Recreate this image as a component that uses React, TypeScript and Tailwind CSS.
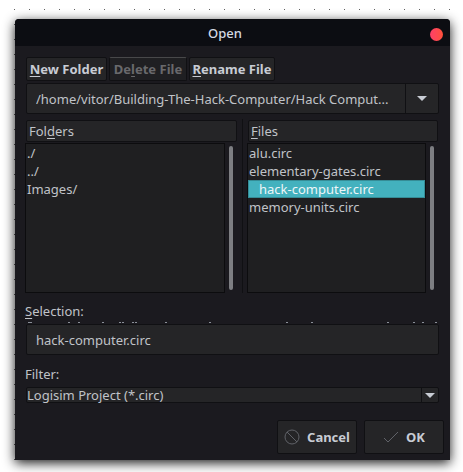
import { useState } from "react";
import type { ReactNode } from "react";

const folders = ["./", "../", "Images/"];
const files = ["alu.circ", "elementary-gates.circ", "hack-computer.circ", "memory-units.circ"];

function Mnemonic({ text, at }: { text: string; at: number }) {
  return (
    <span>
      {text.slice(0, at)}
      <span className="underline underline-offset-2">{text[at]}</span>
      {text.slice(at + 1)}
    </span>
  );
}

function Button({ children, className = "", disabled }: { children: ReactNode; className?: string; disabled?: boolean }) {
  return (
    <button
      type="button"
      disabled={disabled}
      className={`flex items-center justify-center rounded-xs border border-[#101013] bg-[#252527] font-bold whitespace-nowrap text-[#c8ccd4] disabled:border-t-[#48484a] disabled:bg-[#1f1f22] disabled:text-[#69696c] ${className}`}
    >
      {children}
    </button>
  );
}

function Dropdown({
  id,
  label,
  value,
  className,
  selectClass,
  arrowClass,
}: {
  id: string;
  label?: string;
  value: string;
  className: string;
  selectClass: string;
  arrowClass: string;
}) {
  return (
    <div className={`flex items-center rounded-xs border border-[#101013] bg-[#252527] ${className}`}>
      <select id={id} aria-label={label} className={`h-5 min-w-0 flex-1 appearance-none bg-transparent text-ellipsis outline-none ${selectClass}`}>
        <option>{value}</option>
      </select>
      <span className={`flex h-full items-center justify-center border-l border-[#101013] ${arrowClass}`}>
        <svg width="10" height="5" viewBox="0 0 10 5" fill="#c8ccd4" aria-hidden="true">
          <path d="M0 0h10L5 5z" />
        </svg>
      </span>
    </div>
  );
}

function Listing({ title, at, items, initial }: { title: string; at: number; items: string[]; initial: number }) {
  const [selected, setSelected] = useState(initial);
  return (
    <div className="flex flex-col gap-px pt-px">
      <h2 className="ml-px flex h-[22px] items-center rounded-xs border border-[#101013] bg-[#252527] px-[2px]">
        <Mnemonic text={title} at={at} />
      </h2>
      <div className="flex">
        <ul role="listbox" aria-label={title} className="h-[150px] flex-1 border border-[#0c0c0e] bg-[#1f1f21]">
          {items.map((item, i) => (
            <li key={item} role="option" aria-selected={i === selected}>
              <button
                type="button"
                onClick={() => setSelected(i)}
                className={`block h-[18px] w-full border text-left leading-4 whitespace-nowrap ${
                  i === selected ? "border-[#358c96] bg-[#43b1be] pl-[10px] text-[#eef6f8]" : "border-transparent"
                }`}
              >
                {item}
              </button>
            </li>
          ))}
        </ul>
        <span className="mx-1 my-[3px] w-1 rounded-full bg-[#7d7e82]" />
      </div>
    </div>
  );
}

export default function App() {
  return (
    <main className="min-h-screen bg-white bg-[conic-gradient(from_270deg_at_1px_1px,#606060_90deg,transparent_0)] bg-size-[15px_15px] bg-position-[14px_9px] pt-[19px] pr-[13px] pb-3 pl-[15px] font-['Noto_Sans',sans-serif] text-[13px] leading-[18px] text-[#c0c3c8]">
      <section role="dialog" aria-label="Open" className="rounded-t-sm bg-[#1b1a1f] shadow-[0_3px_12px_rgba(0,0,0,0.9)]">
        <header className="flex h-[27px] items-center rounded-t-sm bg-[#0c0d12] pr-[7px] pl-[5px] text-[#d5dae4]">
          <h1 className="flex-1 text-center font-medium">Open</h1>
          <button type="button" aria-label="Close" className="mt-1 size-[13px] rounded-full bg-linear-to-r from-[#ff3f68] to-[#ff5038]" />
        </header>

        <div className="px-[11px] pt-[11px]">
          <div className="flex gap-[2px]">
            <Button className="h-6 w-[81px]"><Mnemonic text="New Folder" at={0} /></Button>
            <Button className="h-6 w-[78px]" disabled><Mnemonic text="Delete File" at={2} /></Button>
            <Button className="h-6 w-[86px]"><Mnemonic text="Rename File" at={0} /></Button>
          </div>
          <Dropdown
            id="path"
            label="Directory"
            value="/home/vitor/Building-The-Hack-Computer/Hack Comput..."
            className="mt-[2px] h-[31px]"
            selectClass="pl-[9px]"
            arrowClass="w-[33px]"
          />
        </div>

        <div className="grid grid-cols-[222fr_191fr] pt-[5px] pr-3 pl-[10px]">
          <div className="mr-1 border-r border-[#101013] pr-[5px]">
            <Listing title="Folders" at={3} items={folders} initial={-1} />
          </div>
          <Listing title="Files" at={0} items={files} initial={2} />
        </div>

        <div className="pt-[9px] pr-[11px] pl-[10px]">
          <label htmlFor="selection" className="block"><Mnemonic text="Selection:" at={0} /></label>
          <div className="ml-px flex flex-col gap-px pt-[2px]">
            {/* ascender tips of the path line that is tucked behind the text box */}
            <svg className="h-px w-full" viewBox="0 0 413 1" preserveAspectRatio="none" stroke="#8a8f98" aria-hidden="true">
              <path d="M2 .5h4M42 .5h2M52 .5h2M76 .5h2M93 .5h2M96 .5h2M106 .5h2M109 .5h2M139 .5h2M183 .5h2M260 .5h2M285 .5h2M361 .5h2M387 .5h2M396 .5h2M409 .5h2" />
            </svg>
            <input id="selection" defaultValue="hack-computer.circ" className="h-[31px] w-full rounded-xs border border-[#101013] bg-[#252527] px-[9px] outline-none" />
          </div>
          <label htmlFor="filter" className="mt-[10px] block">Filter:</label>
          <Dropdown id="filter" value="Logisim Project (*.circ)" className="mt-1 ml-px h-4" selectClass="" arrowClass="w-[17px]" />
        </div>

        <footer className="flex justify-end gap-[7px] pt-[17px] pr-[6px] pb-[6px]">
          <Button className="h-[34px] w-20 gap-[7px]">
            <svg width="16" height="16" viewBox="0 0 16 16" fill="none" stroke="#606268" aria-hidden="true">
              <circle cx="8" cy="8" r="7" />
              <path d="M3 3l10 10" />
            </svg>
            Cancel
          </Button>
          <Button className="h-[34px] w-20 gap-[7px]">
            <svg width="16" height="16" viewBox="0 0 16 16" fill="none" stroke="#606268" aria-hidden="true">
              <path d="M1 9l4 4L15 3" />
            </svg>
            OK
          </Button>
        </footer>
      </section>
    </main>
  );
}
